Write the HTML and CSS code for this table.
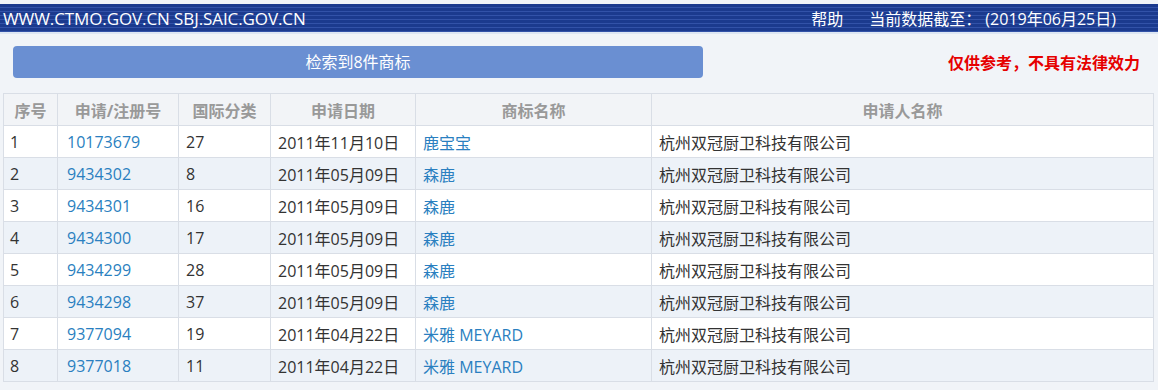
FILE: index.html
```html
<!DOCTYPE html>
<html lang="zh-CN">
<head>
<meta charset="utf-8">
<title>商标检索</title>
<link rel="stylesheet" href="styles.css">
</head>
<body>
<div class="topbar">
  <span class="site">WWW.CTMO.GOV.CN SBJ.SAIC.GOV.CN</span>
  <span class="right"><span class="help">帮助</span><span class="date">当前数据截至： (2019年06月25日)</span></span>
</div>
<div class="toolbar">
  <div class="result-btn">检索到8件商标</div>
  <div class="notice">仅供参考，不具有法律效力</div>
</div>
<table class="grid">
  <colgroup>
    <col class="c1"><col class="c2"><col class="c3"><col class="c4"><col class="c5"><col class="c6">
  </colgroup>
  <thead>
    <tr><th>序号</th><th>申请/注册号</th><th>国际分类</th><th>申请日期</th><th>商标名称</th><th>申请人名称</th></tr>
  </thead>
  <tbody>
    <tr><td>1</td><td><a>10173679</a></td><td>27</td><td>2011年11月10日</td><td><a>鹿宝宝</a></td><td>杭州双冠厨卫科技有限公司</td></tr>
    <tr><td>2</td><td><a>9434302</a></td><td>8</td><td>2011年05月09日</td><td><a>森鹿</a></td><td>杭州双冠厨卫科技有限公司</td></tr>
    <tr><td>3</td><td><a>9434301</a></td><td>16</td><td>2011年05月09日</td><td><a>森鹿</a></td><td>杭州双冠厨卫科技有限公司</td></tr>
    <tr><td>4</td><td><a>9434300</a></td><td>17</td><td>2011年05月09日</td><td><a>森鹿</a></td><td>杭州双冠厨卫科技有限公司</td></tr>
    <tr><td>5</td><td><a>9434299</a></td><td>28</td><td>2011年05月09日</td><td><a>森鹿</a></td><td>杭州双冠厨卫科技有限公司</td></tr>
    <tr><td>6</td><td><a>9434298</a></td><td>37</td><td>2011年05月09日</td><td><a>森鹿</a></td><td>杭州双冠厨卫科技有限公司</td></tr>
    <tr><td>7</td><td><a>9377094</a></td><td>19</td><td>2011年04月22日</td><td><a>米雅 MEYARD</a></td><td>杭州双冠厨卫科技有限公司</td></tr>
    <tr><td>8</td><td><a>9377018</a></td><td>11</td><td>2011年04月22日</td><td><a>米雅 MEYARD</a></td><td>杭州双冠厨卫科技有限公司</td></tr>
  </tbody>
</table>
</body>
</html>
```
FILE: styles.css
```css
html, body {
  margin: 0;
  padding: 0;
}
body {
  background: #f1f4f8;
  font-family: "Open Sans", "Noto Sans CJK SC", sans-serif;
  color: #333;
  padding-top: 4px;
  width: 1158px;
  height: 390px;
  overflow: hidden;
}
.topbar {
  height: 28px;
  display: flex;
  align-items: center;
  justify-content: space-between;
  padding: 0 0 0 3px;
  color: #fff;
  font-size: 16px;
  background: repeating-linear-gradient(to bottom, #1b3a8e 0, #1b3a8e 3px, #3252a8 3px, #3252a8 4px);
  border-bottom: 2px solid #dde6f3;
}
.site {
  font-size: 17px;
  letter-spacing: -0.1px;
}
.right {
  display: flex;
  gap: 26px;
  padding-right: 42px;
}
.toolbar {
  display: flex;
  align-items: center;
  justify-content: space-between;
  padding: 12px 18px 0 13px;
}
.result-btn {
  width: 690px;
  height: 32px;
  line-height: 32px;
  border-radius: 4px;
  background: #6a8fd2;
  color: #fff;
  text-align: center;
  font-size: 16px;
}
.notice {
  color: #e60000;
  font-weight: bold;
  font-size: 16px;
}
.grid {
  margin: 15px 0 0 3px;
  width: 1150px;
  border-collapse: collapse;
  table-layout: fixed;
  font-size: 16px;
}
.c1 { width: 54px; }
.c2 { width: 121px; }
.c3 { width: 92px; }
.c4 { width: 145px; }
.c5 { width: 236px; }
.c6 { width: 502px; }
.grid th, .grid td {
  height: 31px;
  border: 1px solid #d9dee6;
  padding: 0 0 0 7px;
  text-align: left;
  white-space: nowrap;
}
.grid th {
  background: #f2f4f7;
  color: #999;
  font-weight: bold;
  font-size: 16px;
  text-align: center;
  padding: 0;
}
.grid td:first-child {
  padding-left: 6px;
}
.grid td:nth-child(2) {
  padding-left: 9px;
}
.grid tbody tr:nth-child(odd) td { background: #fff; }
.grid tbody tr:nth-child(even) td { background: #edf2f8; }
.grid a {
  color: #2a7fc0;
  text-decoration: none;
}
```
